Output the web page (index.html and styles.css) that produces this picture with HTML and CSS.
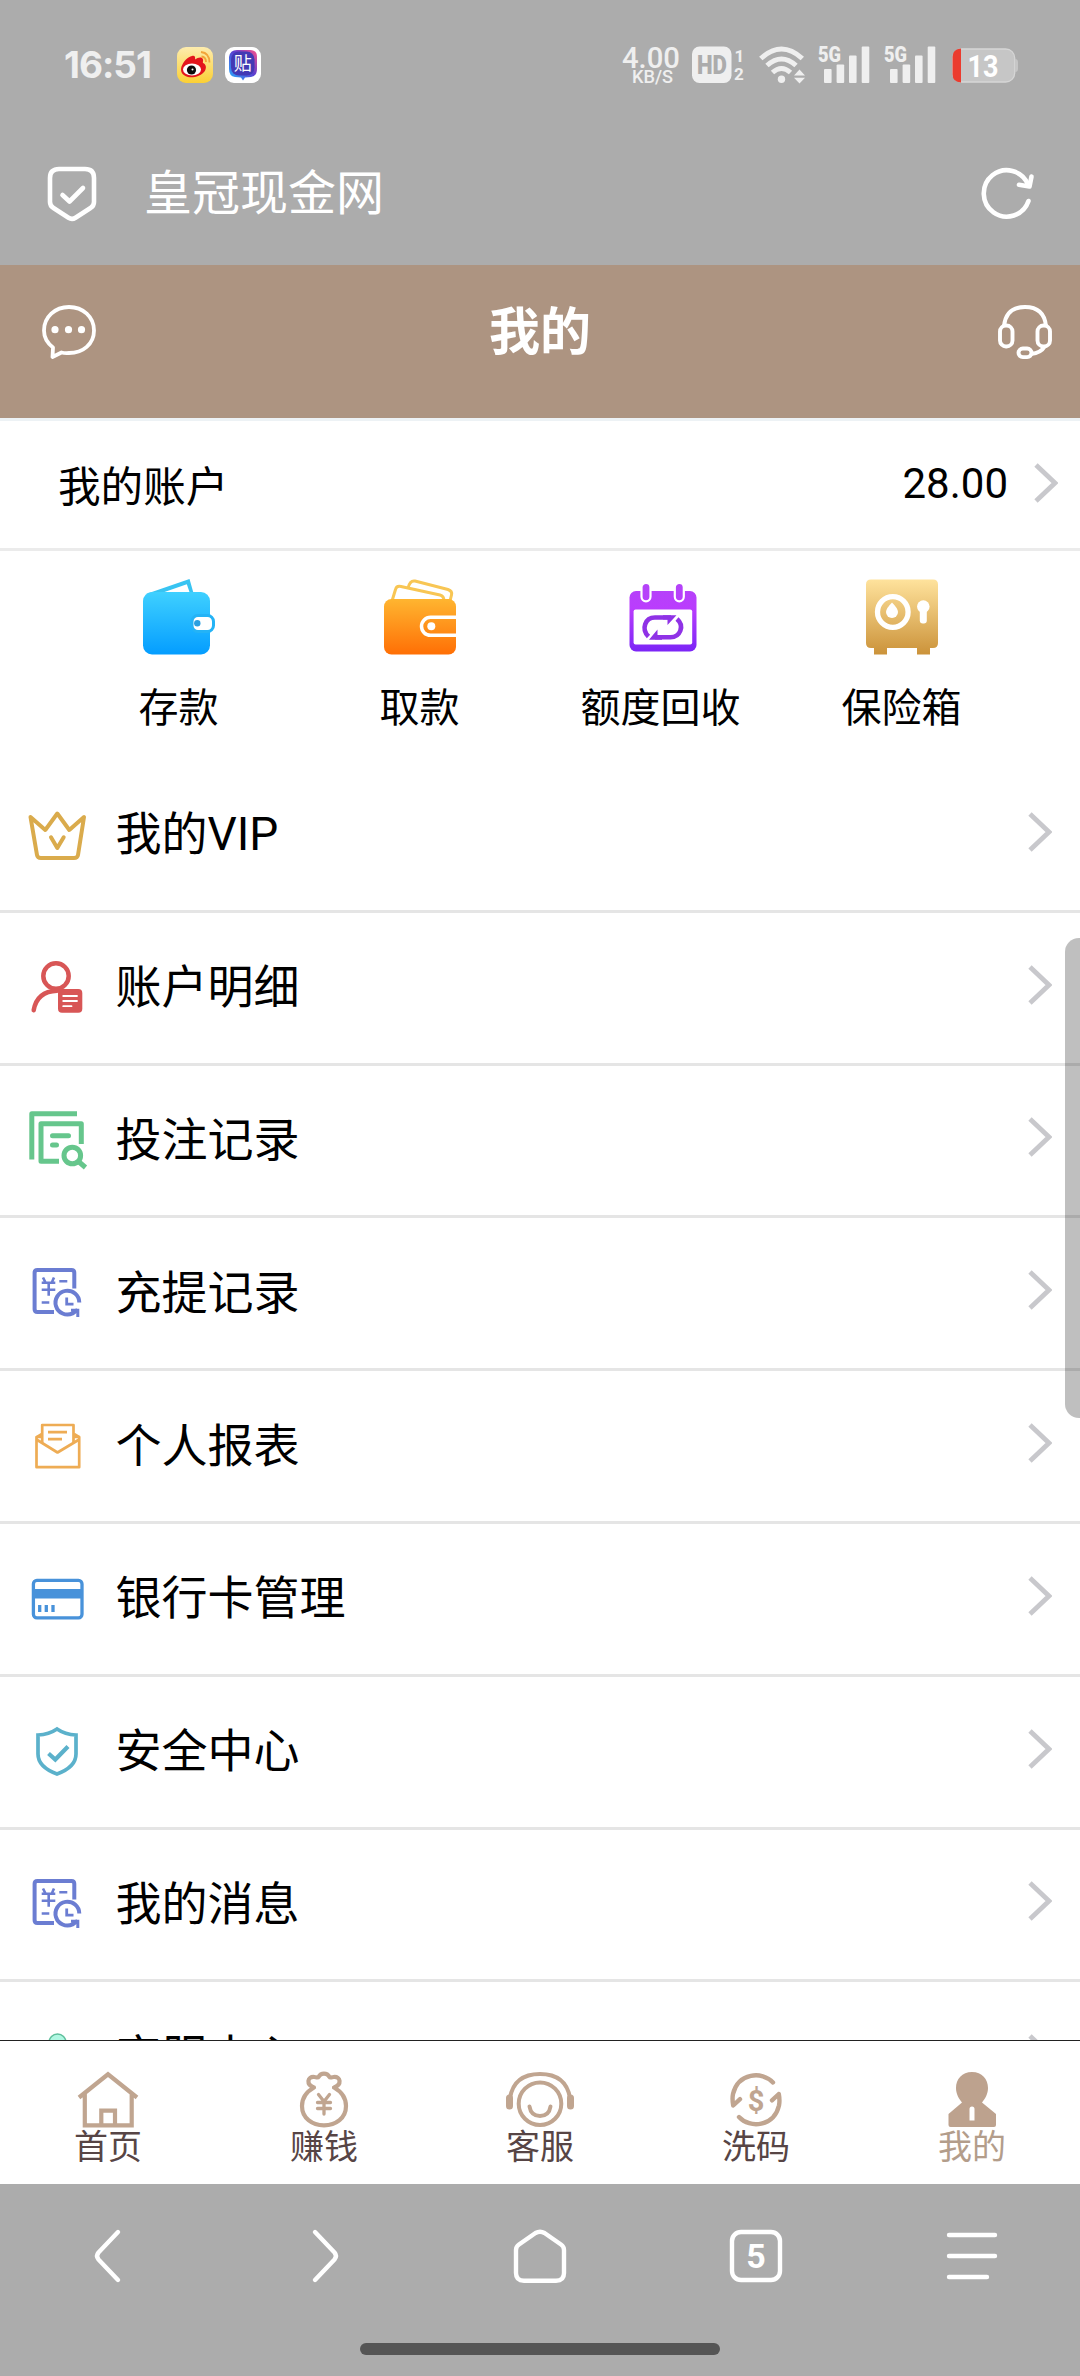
FILE: index.html
```html
<!DOCTYPE html>
<html lang="zh-CN">
<head>
<meta charset="utf-8">
<title>我的</title>
<link rel="stylesheet" href="styles.css">
</head>
<body>
<svg class="defs" width="0" height="0">
  <defs>
    <linearGradient id="blue" x1="0" y1="0" x2="0" y2="1"><stop offset="0" stop-color="#3fd0ff"/><stop offset="1" stop-color="#049dff"/></linearGradient>
    <linearGradient id="orange" x1="0" y1="0" x2="0" y2="1"><stop offset="0" stop-color="#ffb530"/><stop offset="1" stop-color="#ff6f05"/></linearGradient>
    <linearGradient id="purple" gradientUnits="userSpaceOnUse" x1="0" y1="5" x2="0" y2="73"><stop offset="0" stop-color="#b443f8"/><stop offset=".35" stop-color="#ba3dfd"/><stop offset="1" stop-color="#7a25f6"/></linearGradient>
    <linearGradient id="gold" gradientUnits="userSpaceOnUse" x1="0" y1="0" x2="0" y2="76"><stop offset="0" stop-color="#ffe39d"/><stop offset="1" stop-color="#cb9239"/></linearGradient>
    <linearGradient id="weibo" x1="0" y1="0" x2="0" y2="1"><stop offset="0" stop-color="#fdecae"/><stop offset="1" stop-color="#fbd034"/></linearGradient>
    <linearGradient id="tieba" x1="1" y1="0" x2="0" y2="1"><stop offset="0" stop-color="#ff4f8a"/><stop offset=".45" stop-color="#5a3fd0"/><stop offset="1" stop-color="#25b4ff"/></linearGradient>
    <symbol id="arrow" viewBox="0 0 24 40"><path d="M2 2 21 20 2 38" fill="none" stroke="#c8c8cc" stroke-width="4.8"/></symbol>
    <symbol id="record" viewBox="0 0 60 60">
      <g fill="none" stroke="#6b7dd2" stroke-width="4">
        <path d="M47.300 25.500V9.800q0-2.800-2.800-2.800H10.400q-2.800 0-2.800 2.800V46.200q0 2.800 2.800 2.800H27"/>
        <path d="M16 14.500 18.500 19.500M27 14.500 24.800 19.500M14.700 19.700H28.300M14.700 26.700H28.300M21.700 19.700V32.700M32.300 18.200H40.300M14.700 39.500H22.300" stroke-width="2.600"/>
        <path d="M52.300 39.500A11.900 11.900 0 1 0 45.500 50.400L50.500 46.800"/>
        <path d="M39.700 34.500V41.200H46.500" stroke-width="2.800"/>
        <path d="M44 47.300H50.800V54" stroke-width="3"/>
      </g>
    </symbol>
    <symbol id="signal" viewBox="0 0 54 38">
      <text x="0" y="16" font-size="22" font-weight="900" textLength="23" lengthAdjust="spacingAndGlyphs" fill="#efefef">5G</text>
      <g fill="#efefef"><rect x="6" y="23" width="7.600" height="14" rx="1"/><rect x="18.600" y="18.500" width="7.600" height="18.500" rx="1"/><rect x="31" y="9.500" width="7.600" height="27.500" rx="1"/><rect x="43.700" y="0.500" width="7.600" height="36.500" rx="1"/></g>
    </symbol>
  </defs>
</svg>

<header class="browser-top">
  <div class="status">
    <span class="clock">16:51</span>
    <svg class="app" viewBox="0 0 36 36"><rect width="36" height="36" rx="9" fill="url(#weibo)"/><path d="M15 9c3-1 3.500 1.500 3 3.500 3-2 7-3 8 0 .4 1.500-.5 2.500 0 3.500 3 1 4 5 1.500 8.500C24 29 17 31 11 30 5 28.500 3 24 4.500 19.500 6.500 14.500 11 9.500 15 9z" fill="#e3151c"/><ellipse cx="15" cy="22.500" rx="9" ry="6" fill="#fff"/><circle cx="14.500" cy="23" r="4.600" fill="#0c0c0c"/><circle cx="15.500" cy="22.500" r="1" fill="#fff"/><path d="M24.500 9.500q4.500.5 4.500 5.500M24 5q8.500 1 8.500 10.500" fill="none" stroke="#f2a53a" stroke-width="1.800"/></svg>
    <svg class="app" viewBox="0 0 36 36"><rect width="36" height="36" rx="9" fill="#fff"/><path d="M12 3H25q7 0 7 7v12q0 7-6 8l-6 .6-2 2.900-2-2.900-6-.6q-6-1-6-8V10q1-7 8-7z" fill="url(#tieba)"/><rect x="6" y="4.500" width="23.500" height="24" rx="8" fill="#4339b4"/><text x="17.800" y="23" font-size="18" text-anchor="middle" fill="#fff">贴</text></svg>
    <div class="indicators">
      <svg width="59" height="38" viewBox="0 0 59 38"><text x="0" y="21.500" font-size="29" font-weight="500" textLength="58" lengthAdjust="spacingAndGlyphs" fill="#efefef">4.00</text><text x="10" y="36.500" font-size="19" font-weight="500" textLength="41" lengthAdjust="spacingAndGlyphs" fill="#efefef">KB/S</text></svg>
      <svg class="hd" width="52" height="38" viewBox="0 0 52 38"><rect y=".5" width="39.500" height="36.500" rx="7.500" fill="#efefef"/><text x="5" y="28" font-size="26" font-weight="900" textLength="30" lengthAdjust="spacingAndGlyphs" fill="#acacac">HD</text><text x="42.500" y="16" font-size="17" font-weight="700" fill="#efefef">1</text><text x="42" y="34" font-size="17" font-weight="700" fill="#efefef">2</text></svg>
      <svg class="wifi" width="47" height="38" viewBox="0 0 47 38"><g fill="none" stroke="#efefef" stroke-width="5"><path d="M1.800 12.500Q22.500-6.500 43.300 12.500"/><path d="M8 19.500Q22.500 6.500 37 19.500"/><path d="M13.500 26.500Q22.500 18.500 31.500 26.500"/></g><circle cx="22.500" cy="33.300" r="3.700" fill="#efefef"/><path d="M35 29.500 40.500 23.500 46 29.500zM35 31.800H46L40.500 37.600z" fill="#efefef"/></svg>
      <svg class="sim1" width="54" height="38"><use href="#signal"/></svg>
      <svg class="sim2" width="54" height="38"><use href="#signal"/></svg>
      <svg class="battery" width="67" height="38" viewBox="0 0 67 38"><rect x=".7" y="3" width="62" height="33" rx="9" fill="#c6c6c6" stroke="#d6d6d6" stroke-width="1.300"/><path d="M63 13q3 0 3 3v7q0 3-3 3z" fill="#c6c6c6"/><path d="M9 2.500V36.500Q.5 36 .5 28V11Q.5 3 9 2.500z" fill="#eb3b2e"/><text x="15.500" y="30.500" font-size="31" font-weight="700" textLength="31" lengthAdjust="spacingAndGlyphs" fill="#fff">13</text></svg>
    </div>
  </div>
  <div class="address">
    <svg width="50" height="56" viewBox="0 0 50 56" fill="none" stroke="#fff" stroke-width="4.600" stroke-linecap="round" stroke-linejoin="round"><path d="M12 3H38Q47 3 47 12V36Q47 40 43.500 42L28.500 51.800Q25 54 21.500 51.800L6.500 42Q3 40 3 36V12Q3 3 12 3z"/><path d="M15.500 29 22.500 35.500 36 22"/></svg>
    <span class="site">皇冠现金网</span>
    <svg class="reload" width="54" height="54" viewBox="0 0 54 54" fill="none" stroke="#fff" stroke-width="4.600" stroke-linecap="round" stroke-linejoin="round"><path d="M48.500 35A23 23.200 0 1 1 48 18.500"/><path d="M51.500 10.500 49.500 20.500 39 18.800"/></svg>
  </div>
</header>

<section class="titlebar">
  <svg width="54" height="54" viewBox="0 0 54 54" fill="none" stroke="#fff" stroke-width="3.800" stroke-linejoin="round"><path d="M27 2C41 2 52 12 52 25.500S41 48 27 48Q22.500 48.300 19.500 47.500L10.500 52 11 42.500Q2 35.500 2 25.500C2 12 13 2 27 2z"/><g fill="#fff" stroke="none"><circle cx="13" cy="24.700" r="3.600"/><circle cx="26.500" cy="24.700" r="3.600"/><circle cx="39.500" cy="24.700" r="3.600"/></g></svg>
  <h1>我的</h1>
  <svg width="54" height="54" viewBox="0 0 54 54" fill="none" stroke="#fff" stroke-width="3.900"><path d="M6 21Q8 2 27 2T48 21M47 41Q43 48 33 49"/><rect x="2" y="20.500" width="12.500" height="21" rx="6"/><rect x="39.500" y="20.500" width="12.500" height="21" rx="6"/><rect x="20.500" y="43.500" width="13" height="8.600" rx="4.300"/></svg>
</section>

<main>
  <section class="account">
    <span class="label">我的账户</span>
    <span class="balance">28.00</span>
    <svg class="chevron"><use href="#arrow"/></svg>
  </section>
  <section class="actions">
    <div class="action">
      <svg viewBox="0 0 72 76"><path d="M3 15 46.500 0 51 16z" fill="#38c4f2"/><path d="M21.500 13 43.800 5.200 46.500 13z" fill="#fff"/><rect y="13" width="67" height="62.500" rx="9" fill="url(#blue)"/><rect x="49" y="36.500" width="21.500" height="16" rx="6" fill="#fff" stroke="#24b3f6" stroke-width="3"/><circle cx="54.300" cy="44.300" r="3.200" fill="#2a9fe0"/></svg>
      <span>存款</span>
    </div>
    <div class="action">
      <svg viewBox="0 0 72 76"><g fill="#fff" stroke="#f8c654" stroke-width="3" stroke-linejoin="round"><path d="M24 9Q26 1 31 2L64 10.500Q68.500 12 67.500 16L66 22H24z"/><path d="M8 22 11.500 10.500Q12.500 6.500 17 7.500L56 16Q60 17 60 22z"/></g><rect y="20" width="72" height="55.500" rx="7.500" fill="url(#orange)"/><path d="M72 38.300H46.500a9 9 0 0 0 0 18H72" fill="none" stroke="#fff" stroke-width="3.500"/><circle cx="47.300" cy="47.300" r="4" fill="#fff"/></svg>
      <span>取款</span>
    </div>
    <div class="action">
      <svg viewBox="0 0 72 76"><rect x="4.500" y="12" width="67" height="60.500" rx="6.500" fill="url(#purple)"/><rect x="8.600" y="30.600" width="58.600" height="35" rx="2" fill="#fff"/><g stroke="#fff" stroke-width="2.200" fill="url(#purple)"><rect x="16.500" y="3.800" width="9" height="18.500" rx="4.500"/><rect x="49.800" y="3.800" width="9" height="18.500" rx="4.500"/></g><g fill="none" stroke="#8f32e6" stroke-width="4.600"><path d="M23.500 57.500C16 50 20 38.500 30 38.500H46"/><path d="M52 40C60 47 55 58.300 45.500 58.300H30"/></g><path d="M38 36.200H51.500L42.500 46V40.500H38zM37 60.700H24L32.500 50.500V56H37z" fill="#8f32e6"/></svg>
      <span>额度回收</span>
    </div>
    <div class="action">
      <svg viewBox="0 0 72 76"><path d="M5 .500H67Q72 .500 72 5.500V64Q72 69 67 69H64V75.500H51V69H21V75.500H8V69H5Q0 69 0 64V5.500Q0 .500 5 .500z" fill="url(#gold)"/><circle cx="26.800" cy="33" r="15.300" fill="none" stroke="#fff" stroke-width="5.300"/><path d="M26 23.500Q32 29.500 32 33a6 6 0 0 1-12 0Q20 29.500 26 23.500z" fill="#fff"/><circle cx="57.300" cy="27.600" r="6.300" fill="#fff"/><rect x="53.800" y="28" width="7" height="16.500" rx="3" fill="#fff"/></svg>
      <span>保险箱</span>
    </div>
  </section>
  <ul class="menu">
    <li><svg class="icon" viewBox="0 0 60 60" fill="none" stroke="#daab4c" stroke-width="4" stroke-linejoin="round" stroke-linecap="round"><path d="M3.500 12 18.300 25 30.300 8.500 42.300 25 57 12 51 50Q50.500 53 47 53H14Q10.500 53 10 50z"/><path d="M24 32.300 30.300 43 36.700 32.300"/></svg><span>我的VIP</span><svg class="chevron"><use href="#arrow"/></svg></li>
    <li><svg class="icon" viewBox="0 0 60 60" fill="none" stroke="#d85656" stroke-width="4.500" stroke-linecap="round"><circle cx="29" cy="18" r="12.700"/><path d="M6.700 52.200Q10 33.500 30 32.800"/><rect x="31" y="31" width="24.300" height="23.700" rx="4" fill="#d85656" stroke="none"/><path d="M36.200 38H50M36.200 43H50M36.200 48.200H44.500" stroke="#fff" stroke-width="1.800"/></svg><span>账户明细</span><svg class="chevron"><use href="#arrow"/></svg></li>
    <li><svg class="icon" viewBox="0 0 60 60" fill="none" stroke="#66c68c" stroke-width="5" stroke-linejoin="round"><path d="M50 3.700H4.800V49.500"/><path d="M32 51.300H14V13.700H54.300V34"/><path d="M25.500 25.700H41.500M25.500 35H29.500" stroke-linecap="round"/><circle cx="45.300" cy="45.500" r="8.300"/><path d="M51.500 51.500 58.500 57.500"/></svg><span>投注记录</span><svg class="chevron"><use href="#arrow"/></svg></li>
    <li><svg class="icon"><use href="#record"/></svg><span>充提记录</span><svg class="chevron"><use href="#arrow"/></svg></li>
    <li><svg class="icon" viewBox="0 0 60 60" fill="none" stroke="#eeac54" stroke-width="2.700" stroke-linejoin="round"><path d="M14.700 21H9.500V51.200H52.200V21H47"/><path d="M15.200 26.500V9H46.500V26.500"/><path d="M9.500 23.500 30.500 36.500 52.200 23.500M10 21 15 18M52 21 47 18"/><path d="M21 16.200H40M21 23.200H35"/></svg><span>个人报表</span><svg class="chevron"><use href="#arrow"/></svg></li>
    <li><svg class="icon" viewBox="0 0 60 60" fill="none" stroke="#4892da" stroke-width="3.300"><rect x="6.400" y="11.400" width="48.600" height="37.400" rx="3.500"/><path d="M6 24.700H55" stroke-width="9.500"/><path d="M12.700 36V43M19.300 36V43M26 36V43" stroke-width="3.300"/></svg><span>银行卡管理</span><svg class="chevron"><use href="#arrow"/></svg></li>
    <li><svg class="icon" viewBox="0 0 60 60" fill="none" stroke="#5bb1cb" stroke-width="3.700"><path d="M30 7Q22 12.500 11 13V32Q11 45 30 52 49 45 49 32V13Q38 12.500 30 7z"/><path d="M21.500 31.500 28.300 37.500 41 24.500" stroke-width="4.200"/></svg><span>安全中心</span><svg class="chevron"><use href="#arrow"/></svg></li>
    <li><svg class="icon"><use href="#record"/></svg><span>我的消息</span><svg class="chevron"><use href="#arrow"/></svg></li>
    <li><svg class="icon" viewBox="0 0 60 60" fill="#b0f7e2" stroke="#5fbf9c" stroke-width="1.500"><circle cx="30.500" cy="15.500" r="8.500"/><path d="M12 50Q12 27 30.500 27T49 50z"/></svg><span>客服中心</span><svg class="chevron"><use href="#arrow"/></svg></li>
  </ul>
  <div class="scrollbar"></div>
</main>

<nav class="tabs">
  <a><svg viewBox="0 0 60 56" fill="none" stroke="#c0a590" stroke-width="4.200"><path d="M1 25.500 30 2.300 59 25.500M6.800 22V53.300H53.700V22M23.300 53V38.700H37V53"/></svg>首页</a>
  <a><svg viewBox="0 0 60 56" fill="none" stroke="#c0a590" stroke-width="4.200" stroke-linejoin="round" stroke-linecap="round"><path d="M20 15.500C12 13 13 4 20.500 5 23 5.500 24 6 24.500 5 27 .500 33 .500 35.500 5 36 6 37 5.500 39.500 5 47 4 48 13 40 15.500 48 20 52 27 52 34 52 46 42 53.300 30 53.300S8 46 8 34C8 27 12 20 20 15.500z"/><path d="M24.500 22.500 30 29.500 35.500 22.500M23.500 30.500H36.500M23.500 36.500H36.500M30 30V42" stroke-width="3.300"/></svg>赚钱</a>
  <a><svg viewBox="0 0 60 56" fill="none" stroke="#c0a590" stroke-width="4"><circle cx="30" cy="31.700" r="21.300"/><path d="M0 26Q4 2 30 2T60 26"/><path d="M19.500 34.500Q21 44 30 44T40.500 34.500" stroke-linecap="round"/><path d="M-.500 26V34M60.500 26V34" stroke-width="7" stroke-linecap="round"/></svg>客服</a>
  <a><svg viewBox="0 0 60 56" fill="none" stroke="#c0a590" stroke-width="4.400" stroke-linecap="round" stroke-linejoin="round"><path d="M47 10.500C36-1.500 12 1 7 22Q6 27 7.200 33.500L14 27.200"/><path d="M13 45C24 57 48 54.500 53 33.500Q54 28.500 52.800 22L46 28.300"/><text x="30" y="38.500" font-size="29" font-weight="700" text-anchor="middle" fill="#c0a590" stroke="none">$</text></svg>洗码</a>
  <a class="active"><svg viewBox="0 0 60 56" fill="#bda28e"><path fill-rule="evenodd" d="M30 0C40 0 46 7 46 16 46 22 43 27 40 30.500L54 42V53Q54 55 52 55H8.500Q6.500 55 6.500 53V42L20 30.500C17 27 14 22 14 16 14 7 20 0 30 0zM27.500 37V48.500H32.500V37Q32.500 34.500 30 34.500T27.500 37z"/></svg>我的</a>
</nav>

<footer class="browser-bottom">
  <div class="controls">
    <svg viewBox="0 0 60 60"><path d="M40 6 20.500 26.500Q17.500 30 20.500 33.500L40 54"/></svg>
    <svg viewBox="0 0 60 60"><path d="M21 6 40.500 26.500Q43.500 30 40.500 33.500L21 54"/></svg>
    <svg viewBox="0 0 60 60"><path d="M25.500 7 9 18.500Q6 20.500 6 24V47Q6 54.700 14 54.700H46Q54 54.700 54 47V24Q54 20.500 51 18.500L34.500 7Q30 4.500 25.500 7z"/></svg>
    <svg viewBox="0 0 60 60"><rect x="6" y="6" width="48" height="48" rx="9"/><text x="30" y="41.500" font-size="34" font-weight="700" text-anchor="middle">5</text></svg>
    <svg viewBox="0 0 60 60"><path d="M7 9H53M7 30H53M7 51H45"/></svg>
  </div>
  <div class="handle"></div>
</footer>
</body>
</html>
```
FILE: styles.css
```css
* { box-sizing: border-box; }
body {
  margin: 0;
  width: 1080px;
  height: 2376px;
  overflow: hidden;
  display: flex;
  flex-direction: column;
  background: #fff;
  color: #000;
  font-family: Roboto, "Noto Sans CJK SC", sans-serif;
}
svg { display: block; flex: none; overflow: visible; }
.defs { position: absolute; }

.browser-top { height: 265px; flex: none; background: #acacac; color: #fff; }
.status { height: 130px; display: flex; align-items: center; padding-left: 64px; }
.clock {
  width: 113px;
  font: 700 37px/40px Inter, sans-serif;
  letter-spacing: -1px;
  color: #efefef;
}
.app { width: 36px; height: 36px; margin-right: 12px; }
.indicators { display: flex; align-items: center; margin-left: auto; padding-right: 61px; }
.hd { margin-left: 11px; }
.wifi { margin-left: 15px; }
.sim1 { margin-left: 12px; }
.sim2 { margin-left: 12px; }
.battery { margin-left: 14px; }
.address { height: 128px; display: flex; align-items: center; padding: 0 46px 0 47px; }
.site { margin-left: 47px; font-size: 48px; line-height: 60px; }
.reload { margin: -2px 0 0 auto; }

.titlebar {
  height: 156px;
  flex: none;
  display: flex;
  align-items: flex-start;
  justify-content: space-between;
  padding: 40px 28px 0 42px;
  background: #ad9481;
  border-bottom: 3px solid #edf2f5;
}
.titlebar h1 { margin: -2px 0 0 -14px; font-size: 51px; line-height: 60px; font-weight: 700; color: #fff; }

main { flex: 1; min-height: 0; position: relative; overflow: hidden; }
.account {
  height: 130px;
  display: flex;
  align-items: center;
  padding: 0 22px 3px 58px;
  border-bottom: 3px solid #ebebeb;
  font-size: 42px;
}
.account .label { font-size: 42.6px; }
.balance { margin-left: auto; margin-right: 26px; }
.chevron { width: 24px; height: 40px; }

.actions { height: 209px; display: grid; grid-template-columns: repeat(4, 241px); padding: 28px 0 0 58px; }
.action { display: flex; flex-direction: column; align-items: center; gap: 24px; font-size: 40px; line-height: 60px; }
.action svg { width: 72px; height: 76px; }

.menu { list-style: none; margin: 0; padding: 0; }
.menu li {
  height: 152.8px;
  display: flex;
  align-items: center;
  padding: 0 28px 0 27px;
  border-bottom: 3px solid #e5e5e5;
  font-size: 46px;
  line-height: 60px;
}
.menu span { margin: -1px 0 0 28.500px; }
.menu .icon { width: 60px; height: 60px; }
.menu .chevron { margin: -6px 0 0 auto; }
.scrollbar {
  position: absolute;
  top: 517px;
  right: 0;
  width: 15px;
  height: 480px;
  border-radius: 14px 0 0 14px;
  background: rgba(0, 0, 0, .25);
}

.tabs {
  height: 144px;
  flex: none;
  display: grid;
  grid-template-columns: repeat(5, 1fr);
  border-top: 1px solid #222;
  padding-top: 31px;
  background: #fff;
}
.tabs a { display: flex; flex-direction: column; align-items: center; font-size: 34px; line-height: 38px; color: #574545; }
.tabs svg { width: 60px; height: 56px; }
.tabs .active { color: #b39d8b; }

.browser-bottom { height: 192px; flex: none; background: #acacac; display: flex; flex-direction: column; align-items: center; }
.controls { width: 100%; height: 144px; display: grid; grid-template-columns: repeat(5, 1fr); place-items: center; }
.controls svg { width: 60px; height: 60px; fill: none; stroke: #fff; stroke-width: 4.4px; stroke-linecap: round; stroke-linejoin: round; }
.controls text { fill: #fff; stroke: none; }
.handle { width: 360px; height: 12px; margin-top: 15px; border-radius: 6px; background: #555; }
```
